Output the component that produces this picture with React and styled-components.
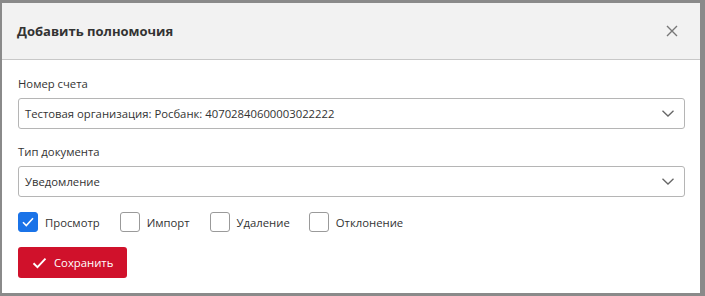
import styled, { createGlobalStyle } from "styled-components";

const Global = createGlobalStyle`
  html, body {
    margin: 0;
    padding: 0;
    background: #8a8a8a;
    font-family: "Open Sans", "Liberation Sans", sans-serif;
  }
`;

const Backdrop = styled.div`
  width: 705px;
  height: 296px;
  padding: 3px 5px 3px 2px;
  box-sizing: border-box;
`;

const Modal = styled.div`
  background: #fff;
  height: 290px;
  display: flex;
  flex-direction: column;
`;

const Header = styled.div`
  height: 57px;
  background: #f2f2f2;
  border-bottom: 1px solid #c8c8c8;
  display: flex;
  align-items: center;
  justify-content: space-between;
  padding: 0 22px 0 15px;
  box-sizing: border-box;
`;

const Title = styled.h2`
  margin: 0;
  font-size: 13px;
  font-weight: 700;
  color: #333;
`;

const Close = styled.button`
  border: 0;
  background: none;
  padding: 0;
  display: flex;
  color: #777;
`;

const Body = styled.div`
  padding: 16px 15px 0 16px;
  display: flex;
  flex-direction: column;
`;

const Label = styled.div`
  font-size: 11.3px;
  color: #333;
  line-height: 16px;
  margin-bottom: 6px;
`;

const Select = styled.div`
  height: 31px;
  border: 1px solid #b5b5b5;
  border-radius: 3px;
  box-sizing: border-box;
  display: flex;
  align-items: center;
  justify-content: space-between;
  padding: 0 10px 0 6px;
  font-size: 11.3px;
  color: #333;
  margin-bottom: ${(p) => p.$gap || 0}px;
`;

const Checks = styled.div`
  display: flex;
  align-items: center;
  margin-top: 15px;
`;

const CheckItem = styled.label`
  display: flex;
  align-items: center;
  gap: 7px;
  font-size: 11.3px;
  color: #333;
  margin-right: ${(p) => p.$mr}px;
`;

const Box = styled.span`
  width: 20px;
  height: 20px;
  box-sizing: border-box;
  border-radius: 3px;
  border: 1px solid ${(p) => (p.$on ? "#1a73e8" : "#9a9a9a")};
  background: ${(p) => (p.$on ? "#1a73e8" : "#fff")};
  display: flex;
  align-items: center;
  justify-content: center;
`;

const SaveButton = styled.button`
  margin-top: 15px;
  width: 109px;
  height: 31px;
  border: 0;
  border-radius: 3px;
  background: #d0112b;
  color: #fff;
  font-family: inherit;
  font-size: 11.3px;
  display: flex;
  align-items: center;
  gap: 7px;
  padding: 0 0 0 14px;
`;

const Chevron = () => (
  <svg width="12" height="7" viewBox="0 0 12 7" fill="none">
    <path d="M0.5 0.8 L6 6 L11.5 0.8" stroke="#666" strokeWidth="1.3" />
  </svg>
);

const Tick = ({ color = "#fff", w = 12, h = 10 }) => (
  <svg width={w} height={h} viewBox="0 0 12 10" fill="none">
    <path d="M1 5.2 L4.3 8.5 L11 1.3" stroke={color} strokeWidth="1.6" />
  </svg>
);

const perms = [
  { name: "Просмотр", on: true, mr: 20 },
  { name: "Импорт", on: false, mr: 20 },
  { name: "Удаление", on: false, mr: 19 },
  { name: "Отклонение", on: false, mr: 0 },
];

export default function App() {
  return (
    <Backdrop>
      <Global />
      <Modal>
        <Header>
          <Title>Добавить полномочия</Title>
          <Close>
            <svg width="12" height="12" viewBox="0 0 12 12">
              <path d="M1 1 L11 11 M11 1 L1 11" stroke="#777" strokeWidth="1.4" />
            </svg>
          </Close>
        </Header>
        <Body>
          <Label>Номер счета</Label>
          <Select $gap={15}>
            <span>Тестовая организация: Росбанк: 40702840600003022222</span>
            <Chevron />
          </Select>
          <Label>Тип документа</Label>
          <Select>
            <span>Уведомление</span>
            <Chevron />
          </Select>
          <Checks>
            {perms.map((p) => (
              <CheckItem key={p.name} $mr={p.mr}>
                <Box $on={p.on}>{p.on && <Tick />}</Box>
                {p.name}
              </CheckItem>
            ))}
          </Checks>
          <SaveButton>
            <Tick w={15} h={12} />
            Сохранить
          </SaveButton>
        </Body>
      </Modal>
    </Backdrop>
  );
}
